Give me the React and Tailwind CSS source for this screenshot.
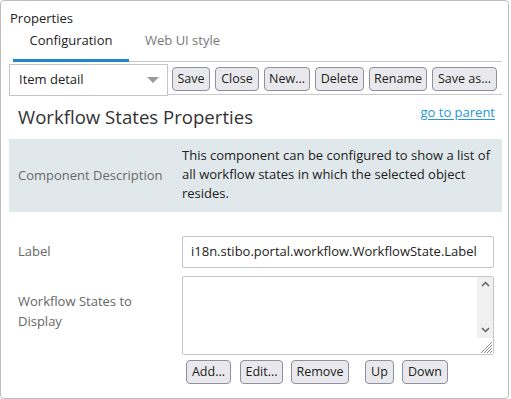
import React from "react";

const font = { fontFamily: '"Open Sans", "Noto Sans", sans-serif' };

// small grey buttons, Firefox-ish look
const Btn = ({ children, className = "" }) => (
  <button
    className={
      "h-[24px] rounded-[4px] border border-[#8f8f9d] bg-[#e9e9ed] text-[12.5px] leading-none text-[#222] flex items-center justify-center " +
      className
    }
  >
    {children}
  </button>
);

const App = () => {
  return (
    <div className="w-[511px] h-[399px] bg-white" style={font}>
      <div className="w-[509px] h-[399px] border border-[#bdbdbd] rounded-[4px] flex flex-col text-[#333]">
        {/* header */}
        <div className="pl-[9px] pt-[9px] text-[13px] leading-[17px] text-[#222]">
          Properties
        </div>

        {/* tabs */}
        <div className="ml-[12px] mr-[6px] flex border-b border-[#c8c8c8] h-[35px]">
          <div className="w-[116px] flex items-start justify-center pt-[4px] border-b-[3px] border-[#1b88ca] -mb-[1px] text-[13px] text-[#222]">
            Configuration
          </div>
          <div className="pl-[16px] pt-[4px] text-[13px] text-[#777]">Web UI style</div>
        </div>

        {/* toolbar */}
        <div className="flex items-start h-[33px] mr-[6px] mt-[2px]">
          <div className="ml-[8px] w-[159px] h-[32px] border border-[#c5c5c5] flex items-center justify-between pl-[9px] pr-[8px] text-[13px] text-[#222]">
            <span>Item detail</span>
            <svg width="12" height="7" viewBox="0 0 12 7">
              <path d="M0 0 L12 0 L6 6 Z" fill="#9a9a9a" />
            </svg>
          </div>
          <div className="flex-1 h-[31px] border-b border-[#c8c8c8] flex items-start pl-[4px] pt-[3px]">
            <Btn className="w-[38px]">Save</Btn>
            <Btn className="w-[44px] ml-[5px]">Close</Btn>
            <Btn className="w-[46px] ml-[5px]">New...</Btn>
            <Btn className="w-[49px] ml-[5px]">Delete</Btn>
            <Btn className="w-[58px] ml-[5px]">Rename</Btn>
            <Btn className="w-[65px] ml-[5px]">Save as...</Btn>
          </div>
        </div>

        {/* title row */}
        <div className="flex items-start justify-between ml-[17px] mr-[13px] mt-[7px] h-[35px]">
          <div className="text-[18.6px] leading-[26px] text-[#333]">Workflow States Properties</div>
          <a className="text-[13px] leading-[18px] -mt-[1px] text-[#2a95d4] underline underline-offset-2">
            go to parent
          </a>
        </div>

        {/* description */}
        <div className="mx-[8px] mr-[6px] h-[73px] bg-[#e1e8eb] flex items-center">
          <div className="w-[173px] pl-[9px] text-[13px] text-[#6a6a6a]">Component Description</div>
          <div className="flex-1 pr-[4px] text-[13px] leading-[19px] text-[#222] -mt-[2px]">
            This component can be configured to show a list of all workflow states in which the
            selected object resides.
          </div>
        </div>

        {/* label row */}
        <div className="flex items-center mt-[24px] h-[32px]">
          <div className="w-[181px] pl-[17px] text-[13px] text-[#666]">Label</div>
          <div className="w-[312px] h-[32px] border border-[#c5c5c5] rounded-[2px] flex items-center pl-[8px] text-[13px] text-[#222] whitespace-nowrap overflow-hidden">
            i18n.stibo.portal.workflow.WorkflowState.Label
          </div>
        </div>

        {/* states row */}
        <div className="flex mt-[8px]">
          <div className="w-[181px] pl-[17px] pt-[15px] text-[13px] leading-[20px] text-[#666]">
            Workflow States to
            <br />
            Display
          </div>
          <div className="flex flex-col">
            <div className="w-[312px] h-[79px] border border-[#c5c5c5] rounded-[2px] flex justify-end">
              <div className="w-[16px] h-full bg-[#f0f0f0] flex flex-col items-center justify-between pt-[4px]">
                <svg width="9" height="6" viewBox="0 0 9 6">
                  <path d="M1 5 L4.5 1.5 L8 5" stroke="#606060" strokeWidth="1.5" fill="none" />
                </svg>
                <div className="flex flex-col items-center">
                  <svg width="9" height="6" viewBox="0 0 9 6">
                    <path d="M1 1 L4.5 4.5 L8 1" stroke="#606060" strokeWidth="1.5" fill="none" />
                  </svg>
                  <div className="w-[16px] h-[16px] bg-white mt-[5px]">
                    <svg width="16" height="16" viewBox="0 0 16 16">
                      <path d="M15 4 L4 15 M15 7 L7 15 M15 10 L10 15 M15 13 L13 15" stroke="#8a8a8a" strokeWidth="1" />
                    </svg>
                  </div>
                </div>
              </div>
            </div>
            <div className="flex mt-[5px] pl-[4px]">
              <Btn className="w-[45px]">Add...</Btn>
              <Btn className="w-[43px] ml-[9px]">Edit...</Btn>
              <Btn className="w-[58px] ml-[8px]">Remove</Btn>
              <Btn className="w-[29px] ml-[16px]">Up</Btn>
              <Btn className="w-[46px] ml-[8px]">Down</Btn>
            </div>
          </div>
        </div>
      </div>
    </div>
  );
};

export default App;
